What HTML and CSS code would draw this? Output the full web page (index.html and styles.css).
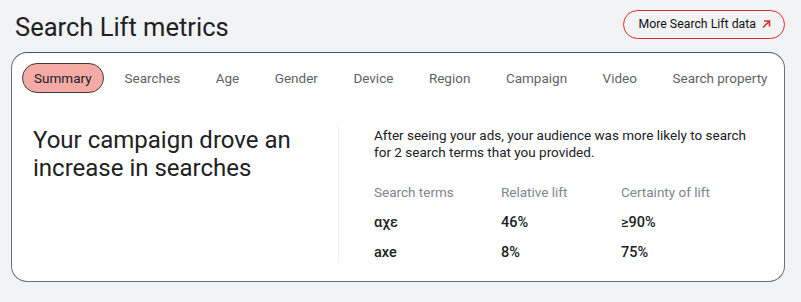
FILE: index.html
```html
<!DOCTYPE html>
<html lang="en">
  <head>
    <meta charset="UTF-8" />
    <title>Search Lift metrics</title>
    <link rel="stylesheet" href="styles.css">
  </head>
  <body>
    <div class="page">
      <div class="top">
        <h1>Search Lift metrics</h1>
        <a class="more-btn" href="#">
          More Search Lift data
          <svg class="arrow" width="10" height="10" viewBox="0 0 10 10">
            <path d="M2 8.5 L8 2.5 M3 2 H8.5 V7.5" fill="none" stroke="currentColor" stroke-width="1.6" />
          </svg>
        </a>
      </div>

      <div class="card">
        <div class="tabs">
          <span class="tab active">Summary</span>
          <span class="tab">Searches</span>
          <span class="tab">Age</span>
          <span class="tab">Gender</span>
          <span class="tab">Device</span>
          <span class="tab">Region</span>
          <span class="tab">Campaign</span>
          <span class="tab">Video</span>
          <span class="tab">Search property</span>
        </div>

        <div class="summary">
          <div class="headline">Your campaign drove an increase in searches</div>
          <div class="details">
            <p class="intro">After seeing your ads, your audience was more likely to search for 2 search terms that you provided.</p>
            <div class="results">
              <div class="col-head">Search terms</div>
              <div class="col-head">Relative lift</div>
              <div class="col-head">Certainty of lift</div>
              <div class="cell">αχε</div>
              <div class="cell">46%</div>
              <div class="cell">≥90%</div>
              <div class="cell">axe</div>
              <div class="cell">8%</div>
              <div class="cell">75%</div>
            </div>
          </div>
        </div>
      </div>
    </div>
  </body>
</html>
```

FILE: styles.css
```css
:root {
  --bg: #f1f3f4;
  --text: #202124;
  --muted: #5f6368;
  --accent: #d93025;
}

* {
  margin: 0;
  padding: 0;
  box-sizing: border-box;
}

body {
  font-family: Roboto, "Liberation Sans", sans-serif;
  color: var(--text);
  background-color: var(--bg);
}

.page {
  padding: 10px 16px 0 11px;
}

.top {
  display: flex;
  justify-content: space-between;
  align-items: center;
  height: 32px;
  margin-bottom: 10px;
}

.top h1 {
  font-size: 25.5px;
  font-weight: 400;
  margin-left: 4px;
  margin-top: 2px;
}

.more-btn {
  display: flex;
  align-items: center;
  gap: 5px;
  height: 29px;
  padding: 0 13px 0 15px;
  border: 1px solid var(--accent);
  border-radius: 15px;
  color: #111;
  text-decoration: none;
  font-size: 12.3px;
  margin-top: -4px;
}

.more-btn .arrow {
  color: var(--accent);
}

.card {
  background-color: white;
  border: 1px solid #6f6f6f;
  border-top-color: #555;
  border-radius: 16px;
  height: 230px;
}

.tabs {
  display: flex;
  align-items: center;
  gap: 35.5px;
  padding: 10px 10px 0 10px;
}

.tab {
  font-size: 13.5px;
  color: var(--muted);
  padding: 6px 0;
}

.tab.active {
  background-color: #f4aba6;
  color: var(--text);
  border: 1px solid #3c3c3c;
  border-radius: 15px;
  padding: 6px 11px;
  margin-right: -14.5px;
}

.summary {
  display: flex;
  padding: 33px 0 0 21px;
}

.headline {
  width: 305px;
  font-size: 24px;
  line-height: 28px;
}

.details {
  border-left: 1px solid #efefef;
  padding-left: 35px;
  height: 136px;
  padding-top: 1px;
}

.intro {
  font-size: 13.5px;
  line-height: 17px;
  width: 390px;
}

.results {
  display: grid;
  grid-template-columns: 127px 120px 1fr;
  row-gap: 13px;
  margin-top: 23px;
}

.col-head {
  font-size: 13.5px;
  color: #80868b;
  margin-bottom: 1px;
}

.cell {
  font-size: 14.5px;
  font-weight: 500;
}
```
